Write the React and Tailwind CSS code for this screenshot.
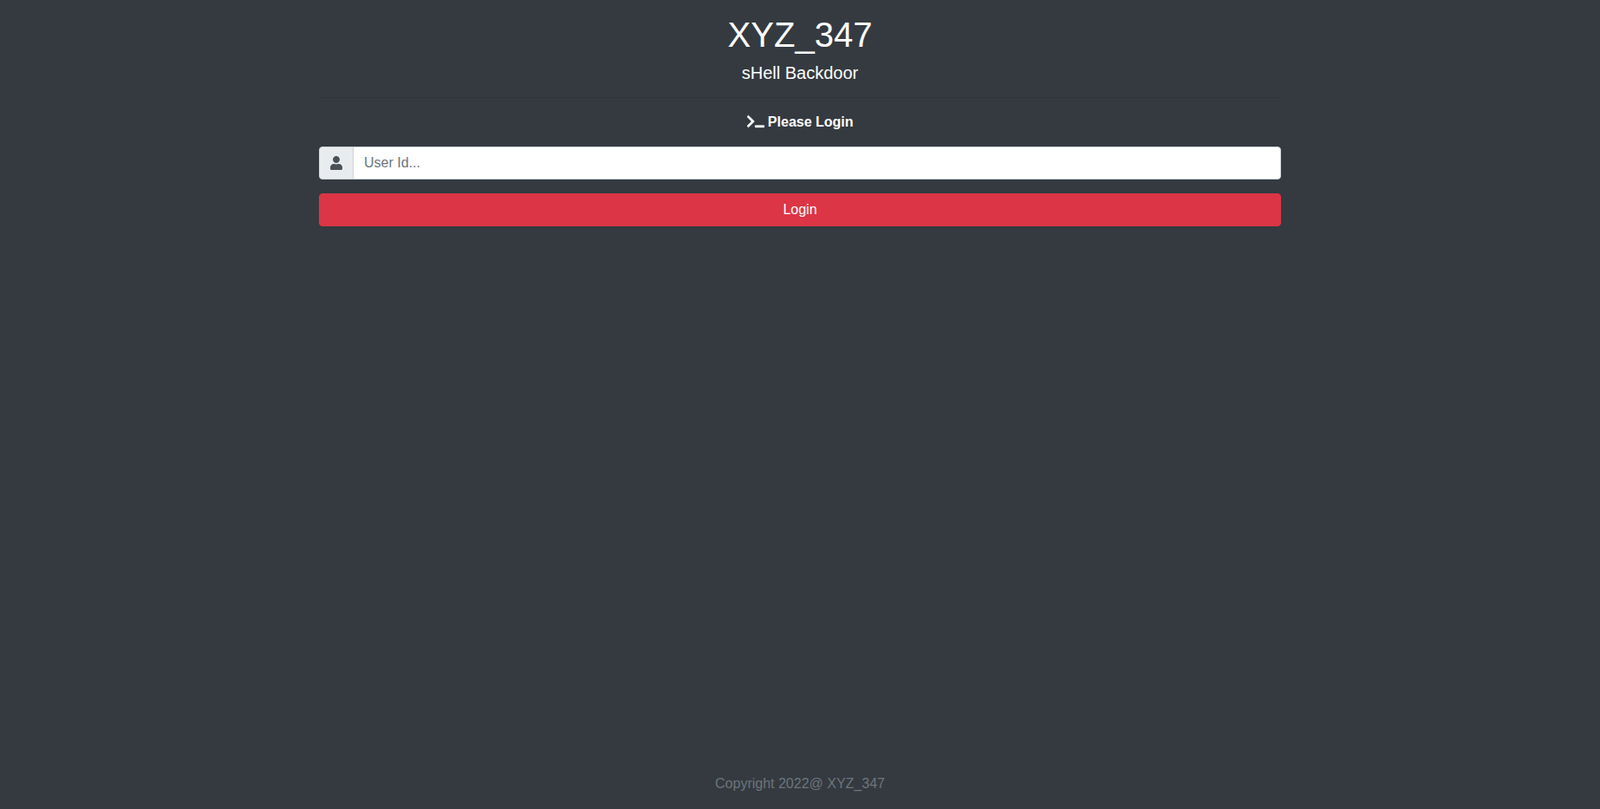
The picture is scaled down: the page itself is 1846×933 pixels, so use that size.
import { FaTerminal, FaUser } from 'react-icons/fa';

export default function App() {
  return (
    <div className="h-screen bg-[#343a40] text-white font-['Liberation_Sans',Arial,sans-serif] flex flex-col">
      <div className="w-[1110px] mx-auto flex-1 pt-4 text-center">
        <h1 className="text-[40px] leading-[48px] mb-2">XYZ_347</h1>
        <h5 className="text-[20px] leading-6">sHell Backdoor</h5>
        <hr className="mt-4 mb-4 border-t border-black/10" />
        <form>
          <div className="text-base leading-6 font-bold mb-4">
            <FaTerminal strokeWidth={10} className="inline-block w-5 h-4 ml-px -mr-px align-[-2px]" /> Please Login
          </div>
          <div className="flex h-[38px] mb-4">
            <div className="w-10 flex items-center justify-center bg-[#e9ecef] border border-[#ced4da] rounded-l text-[#495057]">
              <FaUser className="w-[14px] h-4" />
            </div>
            <input
              type="text"
              placeholder="User Id..."
              className="flex-1 -ml-px px-3 py-1.5 bg-white border border-[#ced4da] rounded-r text-base text-[#495057] placeholder:text-[#6c757d] outline-none"
            />
          </div>
          <button type="button" className="block w-full h-[38px] bg-[#dc3545] border border-[#dc3545] rounded text-base text-white">
            Login
          </button>
        </form>
      </div>
      <div className="text-center text-base leading-6 text-[#6c757d] pb-[17px]">Copyright 2022@ XYZ_347</div>
    </div>
  );
}
